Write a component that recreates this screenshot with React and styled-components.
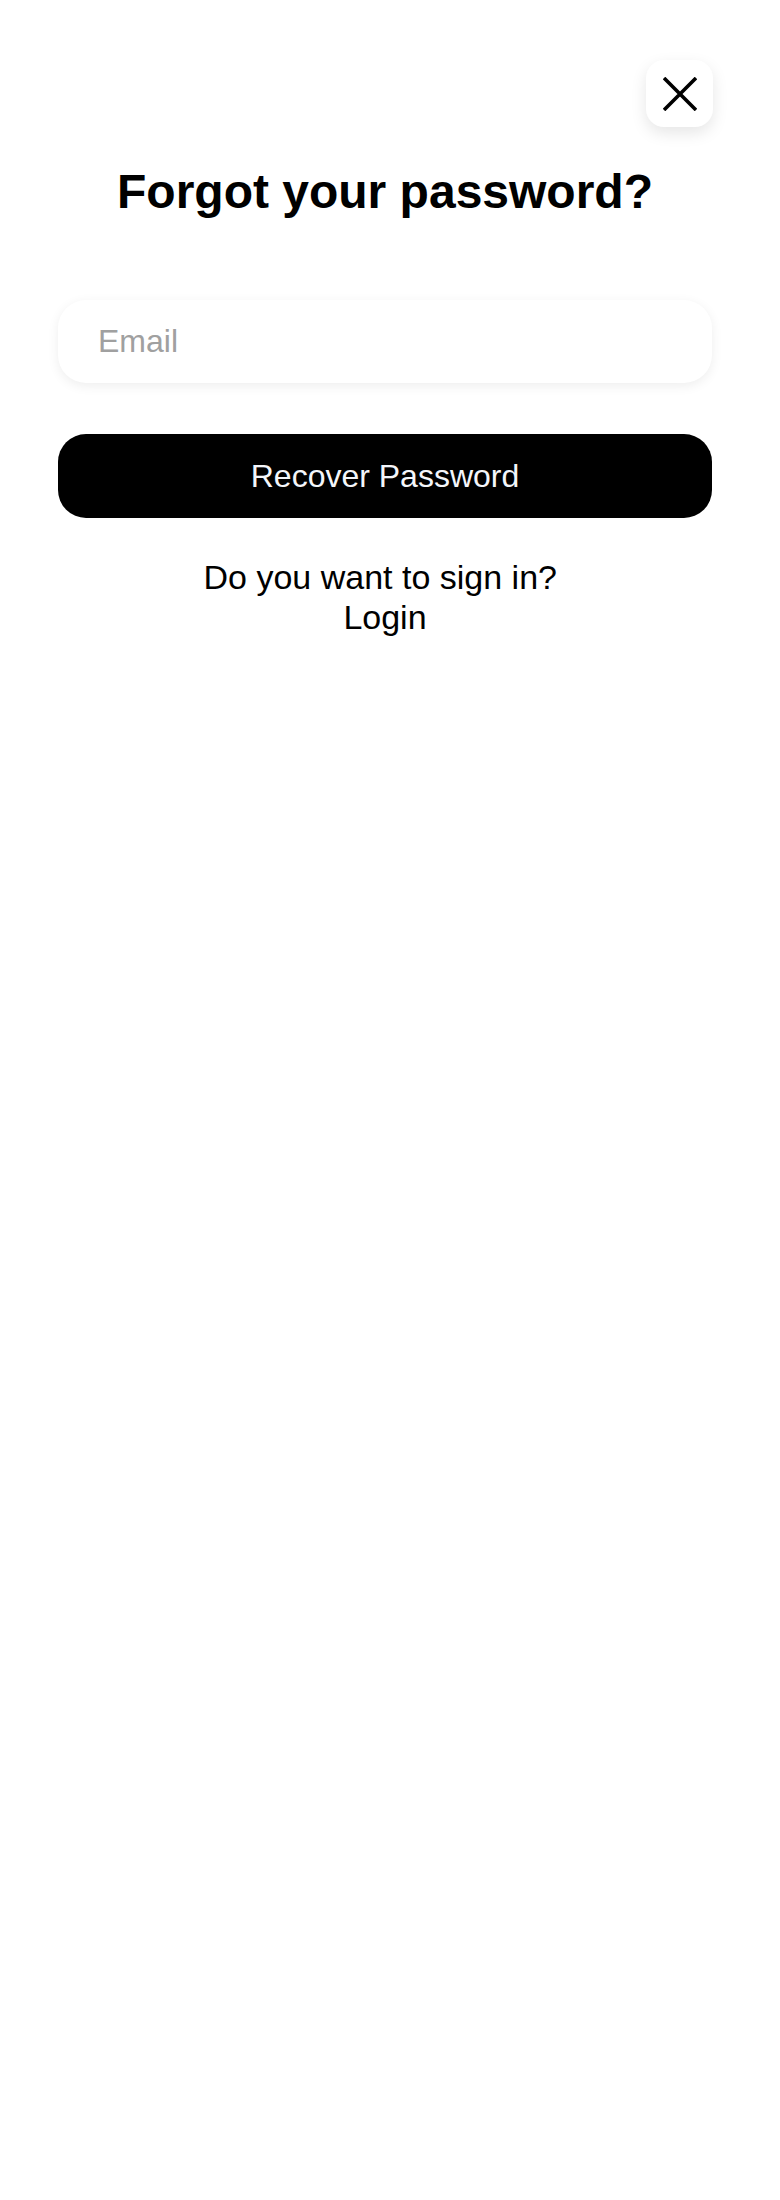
import styled, { createGlobalStyle } from "styled-components";

const GlobalStyle = createGlobalStyle`
  html, body {
    margin: 0;
    padding: 0;
    background: #ffffff;
    font-family: "Liberation Sans", Arial, sans-serif;
    color: #000000;
  }
`;

const Page = styled.div`
  min-height: 2200px;
  padding: 60px 68px 0 58px;
  box-sizing: border-box;
  display: flex;
  flex-direction: column;
`;

const TopBar = styled.div`
  display: flex;
  justify-content: flex-end;
  margin-right: -1px;
`;

const CloseButton = styled.button`
  width: 67px;
  height: 67px;
  border: none;
  border-radius: 18px;
  background: #ffffff;
  box-shadow: 0 6px 16px rgba(0, 0, 0, 0.1);
  display: flex;
  align-items: center;
  justify-content: center;
  padding: 0;
  cursor: pointer;
`;

const Title = styled.h1`
  margin: 37px 0 0;
  font-size: 48px;
  font-weight: 700;
  line-height: normal;
  text-align: center;
`;

const Form = styled.form`
  margin-top: 81px;
  display: flex;
  flex-direction: column;
  gap: 51px;
`;

const EmailInput = styled.input`
  height: 83px;
  box-sizing: border-box;
  border: none;
  border-radius: 28px;
  background: #ffffff;
  box-shadow: 0 3px 12px rgba(0, 0, 0, 0.07);
  padding: 0 40px;
  font-family: inherit;
  font-size: 32px;
  color: #000;
  outline: none;

  &::placeholder {
    color: #a0a0a0;
  }
`;

const SubmitButton = styled.button`
  height: 84px;
  border: none;
  border-radius: 28px;
  background: #000000;
  color: #f4f6fa;
  font-family: inherit;
  font-size: 32px;
  cursor: pointer;
`;

const Footer = styled.div`
  margin-top: 39px;
  display: flex;
  flex-direction: column;
  align-items: center;
  font-size: 34px;
  line-height: 40px;
`;

const Question = styled.span`
  white-space: pre;
`;

const LoginLink = styled.a`
  color: #000;
  text-decoration: none;
  cursor: pointer;
`;

function CloseIcon() {
  return (
    <svg width="34" height="34" viewBox="0 0 34 34">
      <path d="M1 1 L33 33 M33 1 L1 33" stroke="#000" strokeWidth="3.6" fill="none" />
    </svg>
  );
}

export default function App() {
  return (
    <>
      <GlobalStyle />
      <Page>
        <TopBar>
          <CloseButton aria-label="Close">
            <CloseIcon />
          </CloseButton>
        </TopBar>
        <Title>Forgot your password?</Title>
        <Form onSubmit={(e) => e.preventDefault()}>
          <EmailInput type="email" placeholder="Email" />
          <SubmitButton type="submit">Recover Password</SubmitButton>
        </Form>
        <Footer>
          <Question>{"Do you want to sign in?\u00a0"}</Question>
          <LoginLink>Login</LoginLink>
        </Footer>
      </Page>
    </>
  );
}
